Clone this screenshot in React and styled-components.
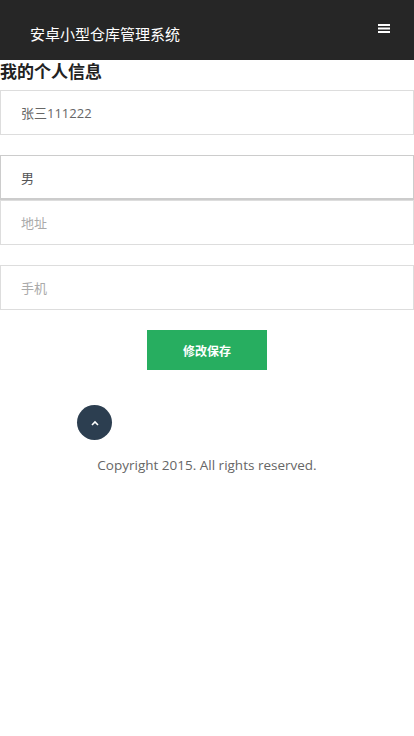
import React from "react";
import styled, { createGlobalStyle } from "styled-components";

const Global = createGlobalStyle`
  html, body { margin: 0; padding: 0; background: #fff; }
  body { font-family: "Open Sans", "Noto Sans CJK SC", sans-serif; }
  * { box-sizing: border-box; }
`;

const Header = styled.header`
  height: 60px;
  background: #262626;
  display: flex;
  align-items: center;
  justify-content: space-between;
  padding: 6px 24px 0 30px;
`;

const Brand = styled.div`
  color: #fff;
  font-size: 15px;
  font-family: "Noto Sans CJK SC", sans-serif;
  letter-spacing: 0;
`;

const MenuBtn = styled.button`
  background: none;
  border: 0;
  padding: 0;
  margin-top: -10px;
  display: flex;
  cursor: pointer;
`;

const Heading = styled.h2`
  margin: 0;
  padding-bottom: 8px;
  font-size: 17px;
  font-weight: 700;
  color: #222;
  font-family: "Noto Sans CJK SC", sans-serif;
  line-height: 22px;
`;

const Form = styled.form`
  display: flex;
  flex-direction: column;
`;

const Field = styled.input`
  height: 45px;
  width: 100%;
  border: 1px solid #ddd;
  padding: 0 20px;
  font-size: 13px;
  color: #666;
  font-family: "Open Sans", "Noto Sans CJK SC", sans-serif;
  margin-bottom: ${(p) => p.$mb || 0}px;
  outline: none;
  &::placeholder { color: #aaa; }
`;

const Select = styled.div`
  height: 45px;
  border: 1px solid #ccc;
  border-bottom-width: 2px;
  padding: 0 20px;
  display: flex;
  align-items: center;
  font-size: 13px;
  color: #555;
  font-family: "Noto Sans CJK SC", sans-serif;
`;

const Actions = styled.div`
  display: flex;
  justify-content: center;
  margin-top: 20px;
`;

const SaveBtn = styled.button`
  width: 120px;
  height: 40px;
  background: #27ae60;
  color: #fff;
  border: 0;
  font-size: 12px;
  font-weight: 700;
  font-family: "Noto Sans CJK SC", sans-serif;
`;

const Footer = styled.footer`
  padding-top: 35px;
  display: flex;
  flex-direction: column;
`;

const TopBtn = styled.button`
  width: 35px;
  height: 35px;
  border-radius: 50%;
  background: #2c3e50;
  border: 0;
  margin-left: 77px;
  display: flex;
  align-items: center;
  justify-content: center;
  padding: 0;
`;

const Copy = styled.p`
  margin: 16px 0 0;
  text-align: center;
  font-size: 13.5px;
  color: #666;
  font-family: "Open Sans", sans-serif;
`;

export default function App() {
  return (
    <>
      <Global />
      <Header>
        <Brand>安卓小型仓库管理系统</Brand>
        <MenuBtn aria-label="menu">
          <svg width="12" height="9" viewBox="0 0 12 9">
            <rect x="0" y="0" width="12" height="2" fill="#fff" />
            <rect x="0" y="3.5" width="12" height="2" fill="#fff" />
            <rect x="0" y="7" width="12" height="2" fill="#fff" />
          </svg>
        </MenuBtn>
      </Header>
      <Heading>我的个人信息</Heading>
      <Form>
        <Field defaultValue="张三111222" $mb={20} />
        <Select>男</Select>
        <Field placeholder="地址" $mb={20} />
        <Field placeholder="手机" />
        <Actions>
          <SaveBtn type="button">修改保存</SaveBtn>
        </Actions>
      </Form>
      <Footer>
        <TopBtn aria-label="top">
          <svg width="8" height="6" viewBox="0 0 8 6">
            <path d="M1 5 L4 2 L7 5" stroke="#fff" strokeWidth="1.6" fill="none" />
          </svg>
        </TopBtn>
        <Copy>Copyright 2015. All rights reserved.</Copy>
      </Footer>
    </>
  );
}
